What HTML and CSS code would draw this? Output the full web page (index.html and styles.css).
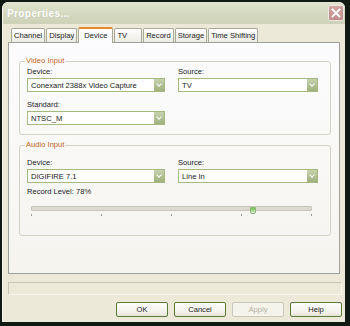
FILE: index.html
```html
<!DOCTYPE html>
<html lang="en">
<head>
  <meta charset="UTF-8" />
  <title>Properties...</title>
  <link rel="stylesheet" href="styles.css">
</head>
<body>
  <div class="window">
    <div class="titlebar">
      <span class="title">Properties...</span>
      <span class="close">
        <svg width="10" height="10" viewBox="0 0 10 10"><path d="M1.5 1.5 L8.5 8.5 M8.5 1.5 L1.5 8.5" stroke="#fff" stroke-width="1.8" stroke-linecap="square"/></svg>
      </span>
    </div>

    <div class="content">
      <div class="tabs">
        <div class="tab">Channel</div>
        <div class="tab">Display</div>
        <div class="tab active">Device</div>
        <div class="tab tv">TV</div>
        <div class="tab">Record</div>
        <div class="tab">Storage</div>
        <div class="tab">Time Shifting</div>
      </div>

      <div class="panel">
        <fieldset class="group video">
          <legend>Video Input</legend>
          <div class="row">
            <div class="field">
              <label>Device:</label>
              <div class="select"><span>Conexant 2388x Video Capture</span><i class="drop"></i></div>
            </div>
            <div class="field">
              <label>Source:</label>
              <div class="select"><span>TV</span><i class="drop"></i></div>
            </div>
          </div>
          <div class="row">
            <div class="field">
              <label>Standard:</label>
              <div class="select"><span>NTSC_M</span><i class="drop"></i></div>
            </div>
          </div>
        </fieldset>

        <fieldset class="group audio">
          <legend>Audio Input</legend>
          <div class="row">
            <div class="field">
              <label>Device:</label>
              <div class="select"><span>DIGIFIRE 7.1</span><i class="drop"></i></div>
            </div>
            <div class="field">
              <label>Source:</label>
              <div class="select"><span>Line In</span><i class="drop"></i></div>
            </div>
          </div>
          <div class="level">Record Level: 78%</div>
          <div class="slider">
            <div class="track"><i class="thumb" style="left: 78%"></i></div>
            <div class="ticks"><i></i><i></i><i></i><i></i><i></i></div>
          </div>
        </fieldset>
      </div>

      <div class="status"></div>

      <div class="buttons">
        <button>OK</button>
        <button>Cancel</button>
        <button disabled>Apply</button>
        <button>Help</button>
      </div>
    </div>
  </div>
</body>
</html>
```

FILE: styles.css
```css
body {
  margin: 0;
  background: #101a12;
  font-family: 'Liberation Sans', Arial, sans-serif;
  font-size: 7.6px;
  color: #222;
}
.window {
  width: 343px;
  height: 320px;
  margin: 2px 0 0 2px;
  background: #ece9d8;
  border-radius: 6px 6px 0 0;
  box-sizing: border-box;
  border-left: 1px solid #f8f7ef;
  overflow: hidden;
}
.titlebar {
  height: 22px;
  background: linear-gradient(#e0e4d0, #d2d7bd 60%, #cdd2b8);
  display: flex;
  align-items: center;
  justify-content: space-between;
  padding: 0 1px 0 4px;
}
.title {
  color: #fff;
  font-weight: bold;
  font-size: 10px;
  letter-spacing: 0.4px;
  text-shadow: 0 0 1px #b9bda6;
}
.close {
  width: 14px;
  height: 14px;
  background: linear-gradient(#cfa6a2, #c08e89);
  border: 1px solid #efe6e2;
  border-radius: 2px;
  display: flex;
  align-items: center;
  justify-content: center;
}
.content {
  padding: 4px 5px 0 5px;
}
.tabs {
  display: flex;
  align-items: flex-end;
  padding-left: 3px;
  height: 14px;
  position: relative;
  z-index: 1;
}
.tab {
  height: 13px;
  line-height: 13px;
  padding: 0 2px;
  background: linear-gradient(#fefefe, #ecebe5);
  border: 1px solid #a8ab9c;
  border-bottom: none;
  border-radius: 2px 2px 0 0;
  margin-right: 1px;
  color: #222;
}
.tab.tv {
  padding-right: 14px;
}
.tab.active {
  height: 14px;
  line-height: 14px;
  background: #fcfcfe;
  border-top: 2px solid #e68b2c;
  margin-bottom: -1px;
  padding: 0 5px;
}
.panel {
  height: 232px;
  box-sizing: border-box;
  border: 1px solid #9aa19a;
  background: linear-gradient(#fcfcfe, #f5f4ef);
  padding: 13px 8px 0 10px;
}
.group {
  margin: 0;
  border: 1px solid #d4d2c4;
  border-radius: 3px;
  padding: 1px 0 0 7px;
}
.group legend {
  color: #c2641c;
  padding: 0 1px;
  margin-left: -2px;
  line-height: 10px;
}
.video {
  padding-bottom: 9px;
}
.audio {
  margin-top: 5px;
  padding-top: 8px;
  padding-bottom: 19px;
}
.row {
  display: flex;
  gap: 13px;
}
.row + .row {
  margin-top: 8px;
}
.field {
  width: 138px;
}
.field + .field {
  width: 140px;
}
.field label {
  display: block;
  line-height: 9px;
  margin-bottom: 2px;
}
.select {
  height: 14px;
  box-sizing: border-box;
  border: 1px solid #a4b97f;
  background: #fff;
  display: flex;
  align-items: center;
  justify-content: space-between;
  padding-left: 3px;
}
.drop {
  width: 10px;
  height: 12px;
  background: linear-gradient(#c6d2ae, #9fb07c);
  position: relative;
}
.drop::after {
  content: "";
  position: absolute;
  left: 3px;
  top: 3px;
  width: 3px;
  height: 3px;
  border-right: 1.5px solid #fff;
  border-bottom: 1.5px solid #fff;
  transform: rotate(45deg);
}
.level {
  margin-top: 4px;
  line-height: 10px;
}
.slider {
  width: 281px;
  margin: 9px 0 0 4px;
}
.track {
  height: 3px;
  background: #dcdad0;
  border: 1px solid #c9c7ba;
  border-radius: 1px;
  position: relative;
}
.thumb {
  position: absolute;
  top: 0;
  width: 4px;
  height: 5px;
  background: linear-gradient(#6cc04a, #e8f3dc);
  border: 1px solid #8fb77a;
  border-radius: 0 0 2px 2px;
}
.ticks {
  display: flex;
  justify-content: space-between;
  margin-top: 3px;
}
.ticks i {
  width: 1px;
  height: 2px;
  background: #9a9a90;
}
.status {
  margin-top: 8px;
  height: 13px;
  box-sizing: border-box;
  border: 1px solid #c8c5b4;
  border-bottom-color: #f6f5ee;
  border-right-color: #f6f5ee;
  margin-right: -2px;
}
.buttons {
  display: flex;
  justify-content: flex-end;
  gap: 6px;
  margin-top: 7px;
  margin-right: -2px;
}
button {
  width: 52px;
  height: 15px;
  font-family: inherit;
  font-size: 7.6px;
  color: #222;
  background: linear-gradient(#fefefe, #f1efe6 80%, #e3dfd0);
  border: 1px solid #5b7b3a;
  border-radius: 2px;
  padding: 0;
}
button:disabled {
  color: #b4b2a6;
  border-color: #cac8bb;
  background: #f5f4ea;
}
```
